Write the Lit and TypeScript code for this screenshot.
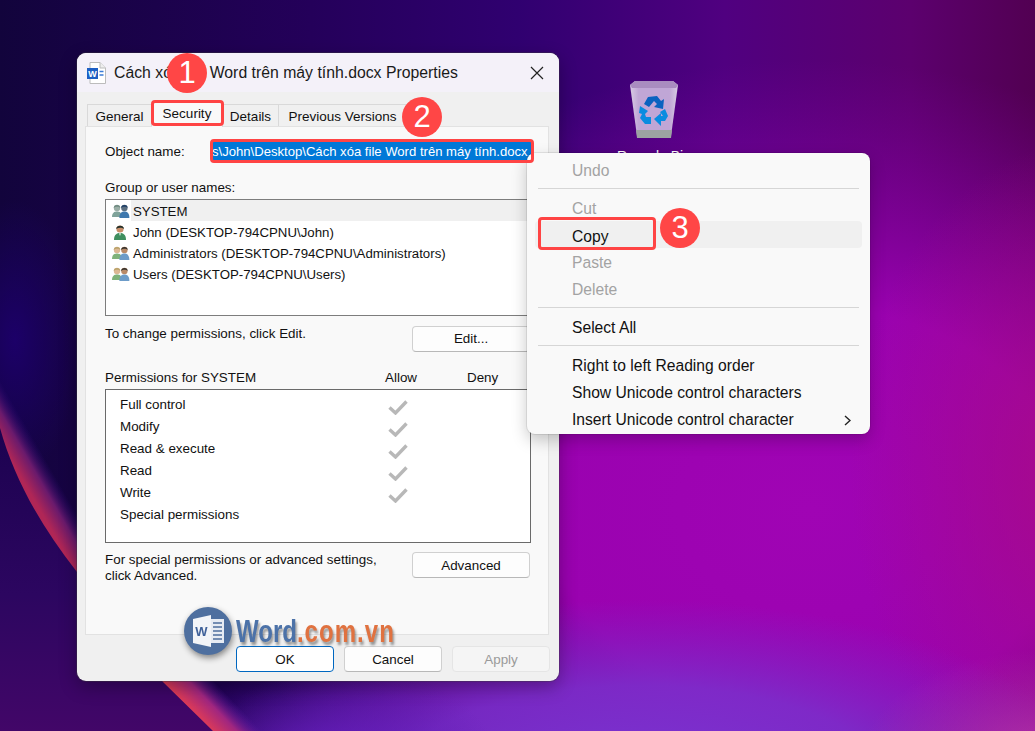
import { LitElement, html, css, svg } from "lit";
import { customElement } from "lit/decorators.js";

const userOne = (hair: string, body: string) => svg`
  <circle cx="8" cy="5" r="3.6" fill="#c98f6a"/>
  <path d="M4.2 5 C4 1 12 .5 12 5 C10 3.4 6.4 3.4 4.2 5Z" fill="${hair}"/>
  <path d="M2 16 C2 10.5 5 9 8 9 C11 9 14 10.5 14 16Z" fill="${body}"/>
  <path d="M7 9.2 L9 9.2 L8 12Z" fill="#e8f4ec"/>`;

const userGroup = (h1: string, b1: string, s1: string, h2: string, b2: string, s2: string) => svg`
  <circle cx="5" cy="5" r="3.2" fill="${s1}"/>
  <path d="M1.7 5 C1.6 1 8.4 .8 8.3 5 C7 3.2 3.4 3.2 1.7 5Z" fill="${h1}"/>
  <path d="M0 14 C0 9.6 2.4 8.4 5 8.4 C7.6 8.4 10 9.6 10 14Z" fill="${b1}"/>
  <circle cx="12.4" cy="5" r="3.2" fill="${s2}"/>
  <path d="M9.1 5 C9 1 15.8 .8 15.7 5 C14.4 3.2 10.8 3.2 9.1 5Z" fill="${h2}"/>
  <path d="M7.4 15 C7.4 10 9.8 8.6 12.4 8.6 C15 8.6 17.4 10 17.4 15Z" fill="${b2}"/>`;

const USERS = [
  { name: "SYSTEM", icon: userGroup("#6f8a80", "#7fa39a", "#9aaea6", "#1f3f66", "#3f78ad", "#5c6f80"), w: 18, sel: true },
  { name: "John (DESKTOP-794CPNU\\John)", icon: userOne("#23302a", "#3f8f5f"), w: 16, sel: false },
  { name: "Administrators (DESKTOP-794CPNU\\Administrators)", icon: userGroup("#b9a36a", "#7fb27a", "#dcb894", "#33302c", "#6d9cc9", "#b98a68"), w: 18, sel: false },
  { name: "Users (DESKTOP-794CPNU\\Users)", icon: userGroup("#b9a36a", "#7fb27a", "#dcb894", "#33302c", "#6d9cc9", "#b98a68"), w: 18, sel: false },
];

const PERMS = [
  ["Full control", true],
  ["Modify", true],
  ["Read & execute", true],
  ["Read", true],
  ["Write", true],
  ["Special permissions", false],
] as const;

@customElement("app-root")
export class AppRoot extends LitElement {
  static styles = css`
    :host { display: block; width: 1035px; height: 731px; position: relative; overflow: hidden; font-family: "Liberation Sans", Arial, sans-serif; color: #111; background: #2a0660; }
    .wall { position: absolute; inset: 0; width: 1035px; height: 731px; display: block; }

    .bin { position: absolute; left: 604px; top: 80px; width: 100px; display: flex; flex-direction: column; align-items: center; gap: 10px; }
    .bin svg { display: block; }
    .bin span { color: #fff; font-size: 14px; line-height: 16px; white-space: nowrap; }

    .window { position: absolute; left: 77px; top: 53px; width: 482px; height: 628px; box-sizing: border-box; border-radius: 9px; background: #f0f0f0; box-shadow: 0 0 0 1px rgba(60,60,60,.35), 0 6px 18px rgba(0,0,0,.3); display: flex; flex-direction: column; overflow: hidden; }
    .title { height: 39px; flex: none; background: #f4f1f9; display: flex; align-items: center; padding: 0 15px 0 9px; box-sizing: border-box; font-size: 15.8px; color: #1a1a1a; }
    .title span { margin-left: 8px; flex: 1; white-space: nowrap; }
    .title .x { margin: 0; display: block; }
    .tabs { display: flex; height: 34px; flex: none; padding-left: 10px; align-items: flex-end; background: #f0f0f0; }
    .tab { height: 22px; box-sizing: border-box; border: 1px solid #d9d9d9; border-bottom: none; border-left: none; font-size: 13.5px; display: flex; align-items: center; justify-content: center; background: #f0f0f0; padding-top: 2px; }
    .tab.first { border-left: 1px solid #d9d9d9; }
    .tab.sel { height: 25px; background: #f9f9f9; position: relative; margin-bottom: -1px; padding: 0 0 3px; z-index: 1; }
    .panel { flex: none; height: 509px; margin: 0 10px 0 8px; box-sizing: border-box; background: #f9f9f9; border: 1px solid #e2e2e2; padding: 14px 18px 0 19px; display: flex; flex-direction: column; font-size: 13.4px; }
    .objrow { display: flex; align-items: center; height: 21px; }
    .objrow label { width: 106px; flex: none; }
    .objval { width: 322px; height: 21px; flex: none; box-sizing: border-box; padding-left: 1px; display: flex; align-items: center; background: #0078d7; color: #fff; white-space: nowrap; font-size: 13.1px; }
    .lbl { line-height: 16px; }
    .lbl.g { margin-top: 18px; }
    .list { margin: 3px -1px 0 0; height: 117px; box-sizing: border-box; border: 1px solid #7d7d7d; background: #fff; flex: none; font-size: 13.25px; }
    .urow { height: 21px; display: flex; align-items: center; }
    .uicon { width: 25px; padding-left: 6px; box-sizing: border-box; flex: none; display: flex; height: 21px; align-items: center; }
    .uname { flex: 1; height: 21px; line-height: 23px; padding-left: 2px; white-space: nowrap; }
    .urow.sel .uname { background: #f0f0f0; }
    .editrow { display: flex; justify-content: space-between; margin-top: 10px; align-items: flex-start; }
    .editrow div, .foot div { line-height: 16px; }
    .btn { width: 118px; height: 26px; box-sizing: border-box; border: 1px solid #d0d0d0; border-bottom-color: #b8b8b8; border-radius: 4px; background: #fdfdfd; display: flex; align-items: center; justify-content: center; font-size: 13.4px; color: #111; flex: none; line-height: 26px; }
    .phead { display: grid; grid-template-columns: 280px 82px auto; margin-top: 18px; line-height: 16px; }
    .pbox { margin: 3px -1px 0 0; height: 154px; box-sizing: border-box; border: 1px solid #6a6a6a; background: #fff; padding: 3px 0 0 14px; flex: none; }
    .prow { height: 22px; display: flex; align-items: center; position: relative; }
    .prow .t { width: 268px; flex: none; }
    .prow svg { display: block; margin-top: 6px; }
    .foot { display: flex; justify-content: space-between; margin-top: 9px; align-items: flex-start; }
    .foot .btn, .actions .btn { padding-top: 2px; }
    .actions { display: flex; justify-content: flex-end; gap: 10px; padding: 11px 9px 0 0; }
    .actions .btn { width: 98px; }
    .btn.ok { border: 1px solid #0067c0; background: #fff; }
    .btn.off { background: #f5f5f5; border-color: #e5e5e5; color: #9a9a9a; }

    .menu { position: absolute; left: 527px; top: 153px; width: 343px; height: 281px; box-sizing: border-box; background: #f9f9f9; border-radius: 8px; box-shadow: 0 0 0 1px rgba(0,0,0,.08), 0 6px 16px rgba(0,0,0,.22); padding: 4px 8px 0; font-size: 15.65px; z-index: 3; }
    .mi { height: 27px; box-sizing: border-box; display: flex; align-items: center; padding-left: 37px; border-radius: 4px; color: #111; position: relative; white-space: nowrap; }
    .mi.dis { color: #a3a3a3; }
    .mi.low { padding-top: 2px; }
    .mi.hov { background: #f0f0f0; padding-top: 4px; }
    .mi svg { position: absolute; right: 11px; top: 9px; }
    .sep { height: 1px; background: #d6d6d6; margin: 4px 3px 5px; }
    .sep.b { margin: 5px 3px 6px; }
    .sep.c { margin: 4px 3px 6px; }

    .mark { position: absolute; box-sizing: border-box; border: 3px solid #f44; border-radius: 4px; z-index: 4; }
    .m1 { left: 151px; top: 100px; width: 73px; height: 26px; }
    .m2 { left: 210px; top: 139px; width: 324px; height: 24px; }
    .m3 { left: 538px; top: 217px; width: 118px; height: 33px; }
    .badge { position: absolute; width: 40px; height: 40px; border-radius: 50%; background: #ff4646; color: #fff; font-size: 31px; display: flex; align-items: center; justify-content: center; z-index: 5; }
    .b1 { left: 167px; top: 53px; }
    .b2 { left: 402px; top: 97px; }
    .b3 { left: 660px; top: 208px; }

    .wm { position: absolute; left: 0; top: 0; z-index: 6; }
    .logo { position: absolute; left: 184px; top: 607px; width: 48px; height: 48px; display: block; filter: drop-shadow(1px 3px 3px rgba(0,0,0,.45)); }
    .wmtext { position: absolute; left: 236px; top: 612px; font-size: 32px; line-height: 38px; font-weight: 700; white-space: nowrap; transform: scaleX(.75); transform-origin: left center; text-shadow: 2px 3px 3px rgba(0,0,0,.4); }
    .wmtext b { color: #4c72a8; }
    .wmtext i { color: #e07240; font-style: normal; letter-spacing: 1.4px; }
  `;

  render() {
    return html`
      <svg class="wall" viewBox="0 0 1035 731" preserveAspectRatio="none">
        <defs>
          <linearGradient id="base" x1="0" y1="0" x2="1" y2="0">
            <stop offset="0" stop-color="#12043c"/>
            <stop offset=".3" stop-color="#24005a"/>
            <stop offset=".5" stop-color="#300070"/>
            <stop offset=".7" stop-color="#500080"/>
            <stop offset=".88" stop-color="#5c006e"/>
            <stop offset="1" stop-color="#520052"/>
          </linearGradient>
          <radialGradient id="mag" gradientUnits="userSpaceOnUse" cx="0" cy="0" r="1" gradientTransform="translate(810 510) scale(580 450)">
            <stop offset="0" stop-color="#a004b4"/>
            <stop offset=".45" stop-color="#9a02b0"/>
            <stop offset="1" stop-color="#8000a0" stop-opacity="0"/>
          </radialGradient>
          <radialGradient id="pink" gradientUnits="userSpaceOnUse" cx="0" cy="0" r="1" gradientTransform="translate(1090 470) scale(240 330)">
            <stop offset="0" stop-color="#a80a88"/>
            <stop offset="1" stop-color="#a80a88" stop-opacity="0"/>
          </radialGradient>
          <radialGradient id="low" gradientUnits="userSpaceOnUse" cx="0" cy="0" r="1" gradientTransform="translate(640 790) scale(460 190)">
            <stop offset="0" stop-color="#7a36d4"/>
            <stop offset=".55" stop-color="#7a30cc" stop-opacity=".85"/>
            <stop offset="1" stop-color="#7a28c8" stop-opacity="0"/>
          </radialGradient>
          <radialGradient id="lowleft" gradientUnits="userSpaceOnUse" cx="0" cy="0" r="1" gradientTransform="translate(330 770) scale(170 110)">
            <stop offset="0" stop-color="#6a20c4"/>
            <stop offset="1" stop-color="#5a18b0" stop-opacity="0"/>
          </radialGradient>
          <radialGradient id="corner" gradientUnits="userSpaceOnUse" cx="0" cy="0" r="1" gradientTransform="translate(1050 760) scale(190 110)">
            <stop offset="0" stop-color="#b834a8"/>
            <stop offset="1" stop-color="#b030a8" stop-opacity="0"/>
          </radialGradient>
          <radialGradient id="blue" gradientUnits="userSpaceOnUse" cx="0" cy="0" r="1" gradientTransform="translate(15 340) scale(65 140)">
            <stop offset="0" stop-color="#1c0068"/>
            <stop offset="1" stop-color="#1c0068" stop-opacity="0"/>
          </radialGradient>
          <linearGradient id="lower" gradientUnits="userSpaceOnUse" x1="0" y1="428" x2="0" y2="731">
            <stop offset="0" stop-color="#1c0250"/>
            <stop offset=".55" stop-color="#2c0660"/>
            <stop offset="1" stop-color="#420668"/>
          </linearGradient>
          <linearGradient id="bandUp" gradientUnits="userSpaceOnUse" x1="40" y1="510" x2="66" y2="495">
            <stop offset="0" stop-color="#b02656"/>
            <stop offset=".5" stop-color="#6a1a6c"/>
            <stop offset="1" stop-color="#300a78" stop-opacity="0"/>
          </linearGradient>
          <linearGradient id="bandLow" gradientUnits="userSpaceOnUse" x1="188" y1="706" x2="214" y2="681">
            <stop offset="0" stop-color="#dc3a58"/>
            <stop offset=".5" stop-color="#a02680"/>
            <stop offset="1" stop-color="#5a18a8" stop-opacity="0"/>
          </linearGradient>
        </defs>
        <rect width="1035" height="731" fill="url(#base)"/>
        <rect width="1035" height="731" fill="url(#mag)"/>
        <rect width="1035" height="731" fill="url(#pink)"/>
        <rect width="1035" height="731" fill="url(#low)"/>
        <rect width="1035" height="731" fill="url(#lowleft)"/>
        <rect width="1035" height="731" fill="url(#corner)"/>
        <rect width="120" height="480" fill="url(#blue)"/>
        <path d="M0 380 H110 V600 H0Z" fill="url(#bandUp)"/>
        <path d="M140 640 H300 V731 H140Z" fill="url(#bandLow)"/>
        <path d="M0 428 C14 478 40 525 77 572 L163 682 L213 731 H0Z" fill="url(#lower)"/>
      </svg>

      <div class="bin">
        <svg width="50" height="58" viewBox="0 0 50 58">
          <defs>
            <linearGradient id="binb" x1="0" y1="0" x2="1" y2="0">
              <stop offset="0" stop-color="#d8cce4"/>
              <stop offset=".18" stop-color="#c0a6d6"/>
              <stop offset=".82" stop-color="#c0a6d6"/>
              <stop offset="1" stop-color="#d8cce4"/>
            </linearGradient>
          </defs>
          <path d="M1 5 L6 1 H44 L49 5 L42 56 H8Z" fill="url(#binb)"/>
          <path d="M1 5 L6 1 H44 L49 5 L47 8 H3Z" fill="#a98cc0"/>
          <path d="M7 50 H43 L42 58 H8Z" fill="#9ca2a2"/>
          <path d="M19 17 L28 16 L32 21 L35 19 L34 29 L25 27 L28 24 L25 21 L20 27 L15 24Z" fill="#0a62c0"/>
          <path d="M11 26 L19 31 L16 34 L17 37 L22 37 L22 44 L16 44 L11 38 L13 34 L10 33Z" fill="#0a8ce0"/>
          <path d="M36 29 L39 36 L36 41 L32 41 L32 46 L25 39 L32 33 L32 36 L34 36 L31 32Z" fill="#0a8ce0"/>
        </svg>
        <span>Recycle Bin</span>
      </div>

      <div class="window">
        <div class="title">
          <svg width="20" height="22" viewBox="0 0 20 22">
            <path d="M4 .5 H14 L19.5 6 V21.5 H4Z" fill="#fff" stroke="#bcbcbc"/>
            <path d="M14 .5 V6 H19.5" fill="#eee" stroke="#bcbcbc"/>
            <rect x="1" y="6" width="11" height="11" fill="#1d5fc4"/>
            <text x="6.5" y="15" font-size="9" font-weight="700" fill="#fff" text-anchor="middle" font-family="Liberation Sans">W</text>
            <path d="M13.5 9.5 H17.5 M13.5 13 H17.5" stroke="#3a7bd5" stroke-width="1.4"/>
          </svg>
          <span>Cách xóa file Word trên máy tính.docx Properties</span>
          <svg class="x" width="14" height="14" viewBox="0 0 14 14"><path d="M1 1 L13 13 M13 1 L1 13" stroke="#222" stroke-width="1.2" fill="none"/></svg>
        </div>
        <div class="tabs">
          <div class="tab first" style="width:65px">General</div>
          <div class="tab sel" style="width:71px">Security</div>
          <div class="tab" style="width:56px">Details</div>
          <div class="tab" style="width:128px">Previous Versions</div>
        </div>
        <div class="panel">
          <div class="objrow">
            <label>Object name:</label>
            <div class="objval"><span>s\\John\\Desktop\\Cách xóa file Word trên máy tính.docx</span></div>
          </div>
          <div class="lbl g">Group or user names:</div>
          <div class="list">
            ${USERS.map((u) => html`
              <div class="urow ${u.sel ? "sel" : ""}">
                <div class="uicon"><svg width="${u.w}" height="16" viewBox="0 0 ${u.w} 16">${u.icon}</svg></div>
                <div class="uname">${u.name}</div>
              </div>`)}
          </div>
          <div class="editrow">
            <div>To change permissions, click Edit.</div>
            <div class="btn">Edit...</div>
          </div>
          <div class="phead"><span>Permissions for SYSTEM</span><span>Allow</span><span>Deny</span></div>
          <div class="pbox">
            ${PERMS.map(([t, c]) => html`
              <div class="prow">
                <div class="t">${t}</div>
                ${c ? html`<svg width="20" height="15" viewBox="0 0 20 15"><path d="M1.5 7.5 L7.5 13 L18.5 1.5" fill="none" stroke="#b8b8b8" stroke-width="3.4"/></svg>` : ""}
              </div>`)}
          </div>
          <div class="foot">
            <div>For special permissions or advanced settings,<br>click Advanced.</div>
            <div class="btn">Advanced</div>
          </div>
        </div>
        <div class="actions">
          <div class="btn ok">OK</div>
          <div class="btn">Cancel</div>
          <div class="btn off">Apply</div>
        </div>
      </div>

      <div class="menu">
        <div class="mi dis">Undo</div>
        <div class="sep"></div>
        <div class="mi dis low">Cut</div>
        <div class="mi hov">Copy</div>
        <div class="mi dis low">Paste</div>
        <div class="mi dis low">Delete</div>
        <div class="sep b"></div>
        <div class="mi">Select All</div>
        <div class="sep c"></div>
        <div class="mi">Right to left Reading order</div>
        <div class="mi">Show Unicode control characters</div>
        <div class="mi">Insert Unicode control character
          <svg width="7" height="11" viewBox="0 0 7 11"><path d="M1 1 L6 5.5 L1 10" fill="none" stroke="#222" stroke-width="1.4"/></svg>
        </div>
      </div>

      <div class="mark m1"></div>
      <div class="mark m2"></div>
      <div class="mark m3"></div>
      <div class="badge b1">1</div>
      <div class="badge b2">2</div>
      <div class="badge b3">3</div>

      <div class="wm">
        <svg class="logo" viewBox="0 0 48 48">
          <circle cx="24" cy="24" r="24" fill="#4e6f9f"/>
          <path d="M9 12 L27 8 V40 L9 36Z" fill="#f2f4f8"/>
          <path d="M27 12 H40 V36 H27Z" fill="#e6ebf3"/>
          <path d="M29 16 H38 M29 20 H38 M29 24 H38 M29 28 H38 M29 32 H38" stroke="#4e6f9f" stroke-width="1.6"/>
          <text x="17.5" y="29" font-size="13" font-weight="700" fill="#3f619a" text-anchor="middle" font-family="Liberation Sans">W</text>
        </svg>
        <div class="wmtext"><b>Word</b><i>.com.vn</i></div>
      </div>
    `;
  }
}
